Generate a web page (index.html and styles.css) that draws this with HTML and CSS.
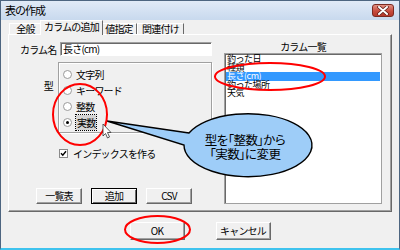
FILE: index.html
```html
<!DOCTYPE html>
<html lang="ja">
<head>
  <meta charset="UTF-8">
  <title>表の作成</title>
  <link rel="stylesheet" href="styles.css">
</head>
<body>
  <div class="window">
    <div class="titlebar">
      <span class="title">表の作成</span>
      <div class="close">
        <svg width="12" height="9" viewBox="0 0 12 9">
          <path d="M2 1 L10 8 M10 1 L2 8" stroke="#5a1a14" stroke-width="3.4" stroke-linecap="round"/>
          <path d="M2 1 L10 8 M10 1 L2 8" stroke="#fff" stroke-width="2" stroke-linecap="round"/>
        </svg>
      </div>
    </div>

    <div class="client">
      <div class="tabs">
        <div class="tab tab-general">全般</div>
        <div class="tab tab-add active">カラムの追加</div>
        <div class="tab tab-value">値指定</div>
        <div class="tab tab-link">関連付け</div>
      </div>

      <div class="panel">
        <div class="left">
          <div class="name-row">
            <span class="name-label">カラム名</span>
            <div class="input">長さ(cm)</div>
          </div>

          <div class="type-row">
            <span class="type-label">型</span>
            <div class="group">
              <div class="radio"><span class="dot"></span><span>文字列</span></div>
              <div class="radio"><span class="dot"></span><span>キーワード</span></div>
              <div class="radio"><span class="dot"></span><span>整数</span></div>
              <div class="radio on"><span class="dot"></span><span class="focus">実数</span></div>
            </div>
          </div>

          <div class="check-row">
            <span class="box">
              <svg width="7" height="7" viewBox="0 0 7 7"><path d="M1 3.2 L2.8 5.2 L6 1.2" fill="none" stroke="#000" stroke-width="1.4"/></svg>
            </span>
            <span>インデックスを作る</span>
          </div>

          <div class="btn-row">
            <div class="btn">一覧表</div>
            <div class="btn default">追加</div>
            <div class="btn">CSV</div>
          </div>
        </div>

        <div class="right">
          <div class="list-title">カラム一覧</div>
          <div class="list">
            <div class="item">釣った日</div>
            <div class="item">種類</div>
            <div class="item sel">長さ(cm)</div>
            <div class="item">釣った場所</div>
            <div class="item">天気</div>
          </div>
        </div>
      </div>

      <div class="footer">
        <div class="btn wide">OK</div>
        <div class="btn wide">キャンセル</div>
      </div>
    </div>

    <!-- annotations drawn over the dialog -->
    <svg class="annot" width="400" height="250" viewBox="0 0 400 250">
      <path d="M189 133 L107 121 L184 145 A64 31.5 0 1 0 189 133 Z" fill="#9ecdf8" stroke="#000" stroke-width="1.4"/>
      <ellipse cx="80" cy="114.5" rx="27" ry="30.5" fill="none" stroke="#f00" stroke-width="2"/>
      <ellipse cx="270" cy="76.5" rx="55" ry="13.5" fill="none" stroke="#f00" stroke-width="2"/>
      <ellipse cx="157.5" cy="229.5" rx="32.5" ry="13.5" fill="none" stroke="#f00" stroke-width="2"/>
      <path d="M103 124 L103 136 L105.5 133.5 L107.5 138 L109.5 137 L107.5 132.5 L111 132.5 Z" fill="#fff" stroke="#333" stroke-width="0.8"/>
    </svg>
    <div class="balloon-text">型を「整数」から<br>「実数」に変更</div>
  </div>
</body>
</html>
```

FILE: styles.css
```css
* { box-sizing: border-box; }
body {
  margin: 0;
  font-family: "Noto Sans CJK JP", sans-serif;
  font-size: 10px;
  color: #000;
}

.window {
  position: relative;
  width: 400px;
  height: 250px;
  background: #f0f0f0;
  display: flex;
  flex-direction: column;
  overflow: hidden;
}

.window::after {
  content: "";
  position: absolute;
  inset: 0;
  border: 1px solid #4d6580;
  border-bottom: 2px solid #3ec3ee;
  pointer-events: none;
}

.titlebar {
  height: 20px;
  flex: none;
  display: flex;
  align-items: center;
  justify-content: space-between;
  padding: 0 6px 0 5px;
  background: linear-gradient(#e2ebf7, #c8d9ee);
}

.title {
  font-size: 11px;
  letter-spacing: -1px;
}

.close {
  width: 22px;
  height: 13px;
  border: 1px solid #7a2a21;
  border-radius: 3px;
  background: linear-gradient(#e39284, #c84c3e 55%, #b3392b);
  display: flex;
  align-items: center;
  justify-content: center;
}

.client {
  flex: 1;
  padding: 0 8px;
  display: flex;
  flex-direction: column;
}

.tabs {
  display: flex;
  align-items: flex-end;
  height: 14px;
  padding-left: 1px;
  position: relative;
  z-index: 1;
}

.tab {
  height: 11px;
  line-height: 10px;
  text-align: center;
  letter-spacing: -0.8px;
  border: 1px solid;
  border-color: #fff #696969 transparent #fff;
  border-bottom: none;
  white-space: nowrap;
}

.tab-general { width: 33px; }
.tab-add { width: 59px; }
.tab-value { width: 36px; }
.tab-link { width: 47px; }

.tab.active {
  height: 15px;
  margin: 0 -2px -1px;
  width: 63px;
  line-height: 11px;
  background: #f0f0f0;
  position: relative;
  z-index: 2;
}

.panel {
  height: 178px;
  border: 1px solid;
  border-color: #fff #696969 #696969 #fff;
  box-shadow: inset -1px -1px #a0a0a0;
  padding: 7px 9px 12px 11px;
  display: grid;
  grid-template-columns: 192px 1fr;
  column-gap: 12px;
}

.left {
  display: flex;
  flex-direction: column;
  letter-spacing: -0.8px;
}

.name-row {
  display: flex;
  align-items: center;
  height: 14px;
}

.name-label {
  width: 40px;
}

.input {
  width: 152px;
  height: 14px;
  background: #fff;
  border: 1px solid;
  border-color: #a0a0a0 #fff #fff #a0a0a0;
  box-shadow: inset 1px 1px #696969;
  line-height: 11px;
  padding-left: 2px;
}

.type-row {
  display: flex;
  margin-top: 6px;
}

.type-label {
  width: 38px;
  text-align: right;
  padding: 16px 5px 0 0;
}

.group {
  width: 154px;
  height: 71px;
  border: 1px solid #a0a0a0;
  box-shadow: inset 1px 1px #fff, 1px 1px #fff;
  padding: 3px 0 0 4px;
}

.radio {
  display: flex;
  align-items: center;
  gap: 4px;
  height: 16px;
}

.dot {
  width: 9px;
  height: 9px;
  flex: none;
  border-radius: 50%;
  border: 1px solid #9a9a9a;
  background: #fff;
  display: flex;
  align-items: center;
  justify-content: center;
}

.radio.on .dot::after {
  content: "";
  width: 3px;
  height: 3px;
  border-radius: 50%;
  background: #000;
}

.focus {
  background: #d4d4d4;
  outline: 1px dotted #000;
  padding: 0 1px;
}

.check-row {
  display: flex;
  align-items: center;
  gap: 5px;
  height: 13px;
  margin-top: 14px;
  padding-left: 39px;
}

.box {
  width: 9px;
  height: 9px;
  background: #fff;
  border: 1px solid #8a8a8a;
  display: flex;
  align-items: center;
  justify-content: center;
}

.btn-row {
  display: flex;
  gap: 9px;
  margin-top: 28px;
  padding-left: 16px;
}

.btn {
  width: 46px;
  height: 16px;
  line-height: 14px;
  text-align: center;
  letter-spacing: -0.8px;
  background: #f0f0f0;
  border: 1px solid;
  border-color: #fff #696969 #696969 #fff;
  box-shadow: inset -1px -1px #a0a0a0;
}

.btn.default {
  border-color: #000;
  box-shadow: inset 1px 1px #fff, inset -1px -1px #696969;
}

.right {
  display: flex;
  flex-direction: column;
}

.list-title {
  height: 11px;
  line-height: 10px;
  text-align: center;
  letter-spacing: -0.8px;
}

.list {
  flex: 1;
  background: #fff;
  border: 1px solid #a0a0a0;
  box-shadow: inset 1px 1px #696969;
  padding: 1px 1px 0;
  overflow: hidden;
}

.item {
  height: 8.5px;
  font-size: 9px;
  line-height: 8.5px;
  padding-left: 1px;
  white-space: nowrap;
  letter-spacing: -0.5px;
}

.item.sel {
  background: #3399ff;
  color: #fff;
}

.footer {
  flex: 1;
  display: flex;
  justify-content: center;
  gap: 31px;
  padding-top: 10px;
}

.btn.wide {
  width: 55px;
  height: 18px;
  line-height: 16px;
}

.annot {
  position: absolute;
  left: 0;
  top: 0;
}

.balloon-text {
  position: absolute;
  left: 195px;
  top: 133px;
  width: 100px;
  text-align: center;
  font-size: 12.5px;
  line-height: 14px;
  letter-spacing: -0.5px;
  font-feature-settings: "palt";
}
```
